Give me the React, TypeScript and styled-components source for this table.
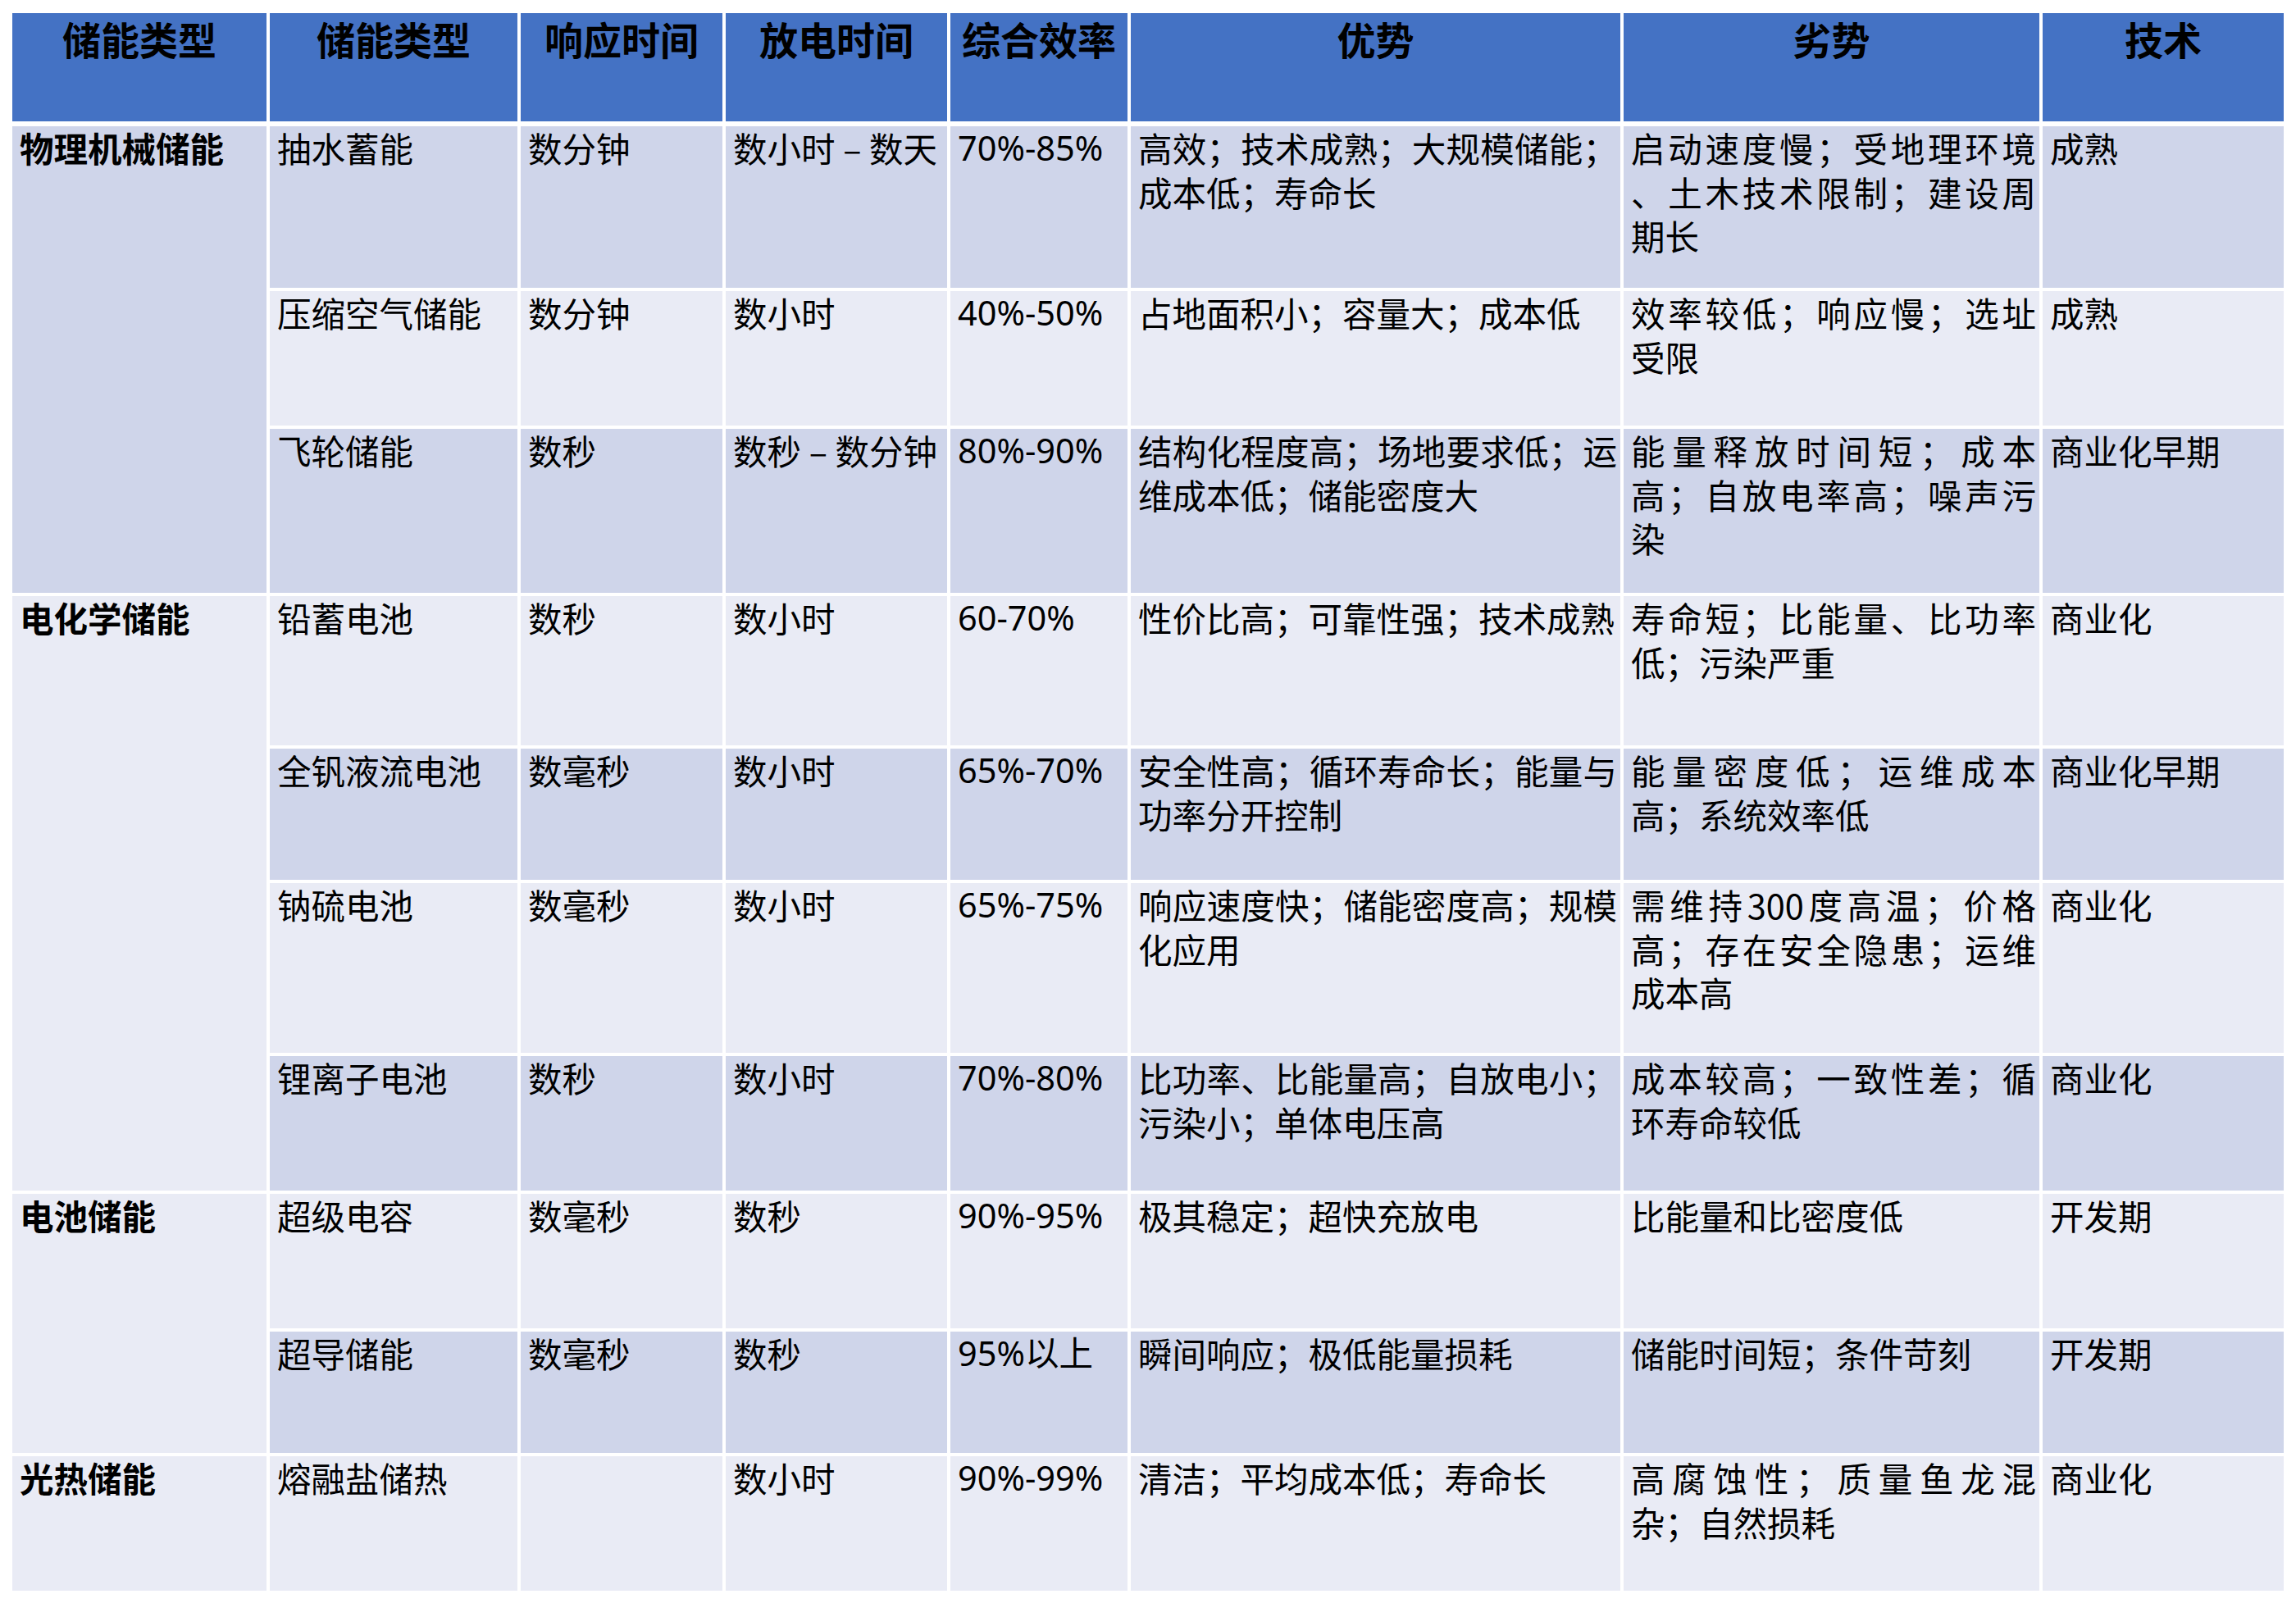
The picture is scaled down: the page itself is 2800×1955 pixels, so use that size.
import React from "react";
import styled, { createGlobalStyle } from "styled-components";

const Colors = {
  header: "#4472C4",
  dark: "#CFD5EA",
  light: "#E9EBF5",
  text: "#000000",
};

const GlobalStyle = createGlobalStyle`
  html, body {
    margin: 0;
    background: #ffffff;
  }
  body {
    font-family: "Noto Sans CJK SC", "Noto Sans", sans-serif;
    color: ${Colors.text};
  }
`;

const columnTemplate = "310px 302px 246px 270px 216px 597px 507px 294px";

type Tone = "dark" | "light";

const Page = styled.div`
  padding: 16px 15px;
`;

const Table = styled.div`
  display: flex;
  flex-direction: column;
  gap: 6px;
  width: 2770px;
`;

const HeaderRow = styled.div`
  display: grid;
  grid-template-columns: ${columnTemplate};
  column-gap: 4px;
  height: 132px;
`;

const HeaderCell = styled.div`
  background: ${Colors.header};
  font-size: 47px;
  font-weight: 700;
  line-height: 56px;
  text-align: center;
  padding-top: 3px;
`;

const Body = styled.div<{ $rows: string }>`
  display: grid;
  grid-template-columns: ${columnTemplate};
  grid-template-rows: ${(p) => p.$rows};
  gap: 4px;
`;

const Cell = styled.div<{ $tone: Tone }>`
  background: ${(p) => (p.$tone === "dark" ? Colors.dark : Colors.light)};
  padding: 0 4px 0 9px;
  font-size: 41.5px;
  line-height: 53.6px;
`;

const GroupCell = styled(Cell)<{ $start: number; $span: number }>`
  grid-column: 1;
  grid-row: ${(p) => `${p.$start} / span ${p.$span}`};
  font-weight: 700;
`;

// percentages are set in a narrow face in the source slide
const NumberCell = styled(Cell)`
  font-family: "Noto Sans", "Noto Sans CJK SC", sans-serif;
  font-stretch: condensed;
`;

const Line = styled.div<{ $justify?: boolean }>`
  white-space: nowrap;
  text-align: ${(p) => (p.$justify ? "justify" : "left")};
  text-align-last: ${(p) => (p.$justify ? "justify" : "auto")};
`;

// the range dash takes one full character cell, with a short stroke
const Dash = styled.span`
  display: inline-block;
  width: 1em;
  text-align: center;
`;

type Row = {
  name: string;
  response: string;
  discharge: string;
  efficiency: string;
  pros: string[];
  cons: string[];
  stage: string;
  height: number;
};

type Group = {
  label: string;
  rows: Row[];
};

const headers = [
  "储能类型",
  "储能类型",
  "响应时间",
  "放电时间",
  "综合效率",
  "优势",
  "劣势",
  "技术",
];

const groups: Group[] = [
  {
    label: "物理机械储能",
    rows: [
      {
        name: "抽水蓄能",
        response: "数分钟",
        discharge: "数小时－数天",
        efficiency: "70%-85%",
        pros: ["高效；技术成熟；大规模储能；", "成本低；寿命长"],
        cons: ["启动速度慢；受地理环境", "、土木技术限制；建设周", "期长"],
        stage: "成熟",
        height: 197,
      },
      {
        name: "压缩空气储能",
        response: "数分钟",
        discharge: "数小时",
        efficiency: "40%-50%",
        pros: ["占地面积小；容量大；成本低"],
        cons: ["效率较低；响应慢；选址", "受限"],
        stage: "成熟",
        height: 164,
      },
      {
        name: "飞轮储能",
        response: "数秒",
        discharge: "数秒－数分钟",
        efficiency: "80%-90%",
        pros: ["结构化程度高；场地要求低；运", "维成本低；储能密度大"],
        cons: ["能量释放时间短；成本", "高；自放电率高；噪声污", "染"],
        stage: "商业化早期",
        height: 200,
      },
    ],
  },
  {
    label: "电化学储能",
    rows: [
      {
        name: "铅蓄电池",
        response: "数秒",
        discharge: "数小时",
        efficiency: "60-70%",
        pros: ["性价比高；可靠性强；技术成熟"],
        cons: ["寿命短；比能量、比功率", "低；污染严重"],
        stage: "商业化",
        height: 182,
      },
      {
        name: "全钒液流电池",
        response: "数毫秒",
        discharge: "数小时",
        efficiency: "65%-70%",
        pros: ["安全性高；循环寿命长；能量与", "功率分开控制"],
        cons: ["能量密度低；运维成本", "高；系统效率低"],
        stage: "商业化早期",
        height: 160,
      },
      {
        name: "钠硫电池",
        response: "数毫秒",
        discharge: "数小时",
        efficiency: "65%-75%",
        pros: ["响应速度快；储能密度高；规模", "化应用"],
        cons: ["需维持300度高温；价格", "高；存在安全隐患；运维", "成本高"],
        stage: "商业化",
        height: 207,
      },
      {
        name: "锂离子电池",
        response: "数秒",
        discharge: "数小时",
        efficiency: "70%-80%",
        pros: ["比功率、比能量高；自放电小；", "污染小；单体电压高"],
        cons: ["成本较高；一致性差；循", "环寿命较低"],
        stage: "商业化",
        height: 164,
      },
    ],
  },
  {
    label: "电池储能",
    rows: [
      {
        name: "超级电容",
        response: "数毫秒",
        discharge: "数秒",
        efficiency: "90%-95%",
        pros: ["极其稳定；超快充放电"],
        cons: ["比能量和比密度低"],
        stage: "开发期",
        height: 164,
      },
      {
        name: "超导储能",
        response: "数毫秒",
        discharge: "数秒",
        efficiency: "95%以上",
        pros: ["瞬间响应；极低能量损耗"],
        cons: ["储能时间短；条件苛刻"],
        stage: "开发期",
        height: 148,
      },
    ],
  },
  {
    label: "光热储能",
    rows: [
      {
        name: "熔融盐储热",
        response: "",
        discharge: "数小时",
        efficiency: "90%-99%",
        pros: ["清洁；平均成本低；寿命长"],
        cons: ["高腐蚀性；质量鱼龙混", "杂；自然损耗"],
        stage: "商业化",
        height: 164,
      },
    ],
  },
];

const toneOf = (index: number): Tone => (index % 2 === 0 ? "dark" : "light");

const Lines: React.FC<{ lines: string[] }> = ({ lines }) => (
  <>
    {lines.map((line, i) => (
      <Line key={i} $justify={i < lines.length - 1}>
        {line}
      </Line>
    ))}
  </>
);

const Range: React.FC<{ text: string }> = ({ text }) => {
  const [from, to] = text.split("－");
  if (to === undefined) return <>{text}</>;
  return (
    <>
      {from}
      <Dash>–</Dash>
      {to}
    </>
  );
};

const App: React.FC = () => {
  const allRows = groups.flatMap((g) => g.rows);
  const rowTemplate = allRows.map((r) => `${r.height}px`).join(" ");

  let rowIndex = 0;
  const cells: React.ReactNode[] = [];
  groups.forEach((group) => {
    cells.push(
      <GroupCell
        key={`group-${group.label}`}
        $tone={toneOf(rowIndex)}
        $start={rowIndex + 1}
        $span={group.rows.length}
      >
        {group.label}
      </GroupCell>,
    );
    group.rows.forEach((row) => {
      const tone = toneOf(rowIndex);
      cells.push(
        <Cell key={`${row.name}-name`} $tone={tone}>{row.name}</Cell>,
        <Cell key={`${row.name}-response`} $tone={tone}>{row.response}</Cell>,
        <Cell key={`${row.name}-discharge`} $tone={tone}>
          <Range text={row.discharge} />
        </Cell>,
        <NumberCell key={`${row.name}-efficiency`} $tone={tone}>
          {row.efficiency}
        </NumberCell>,
        <Cell key={`${row.name}-pros`} $tone={tone}>
          <Lines lines={row.pros} />
        </Cell>,
        <Cell key={`${row.name}-cons`} $tone={tone}>
          <Lines lines={row.cons} />
        </Cell>,
        <Cell key={`${row.name}-stage`} $tone={tone}>{row.stage}</Cell>,
      );
      rowIndex += 1;
    });
  });

  return (
    <>
      <GlobalStyle />
      <Page>
        <Table>
          <HeaderRow>
            {headers.map((h, i) => (
              <HeaderCell key={i}>{h}</HeaderCell>
            ))}
          </HeaderRow>
          <Body $rows={rowTemplate}>{cells}</Body>
        </Table>
      </Page>
    </>
  );
};

export default App;
